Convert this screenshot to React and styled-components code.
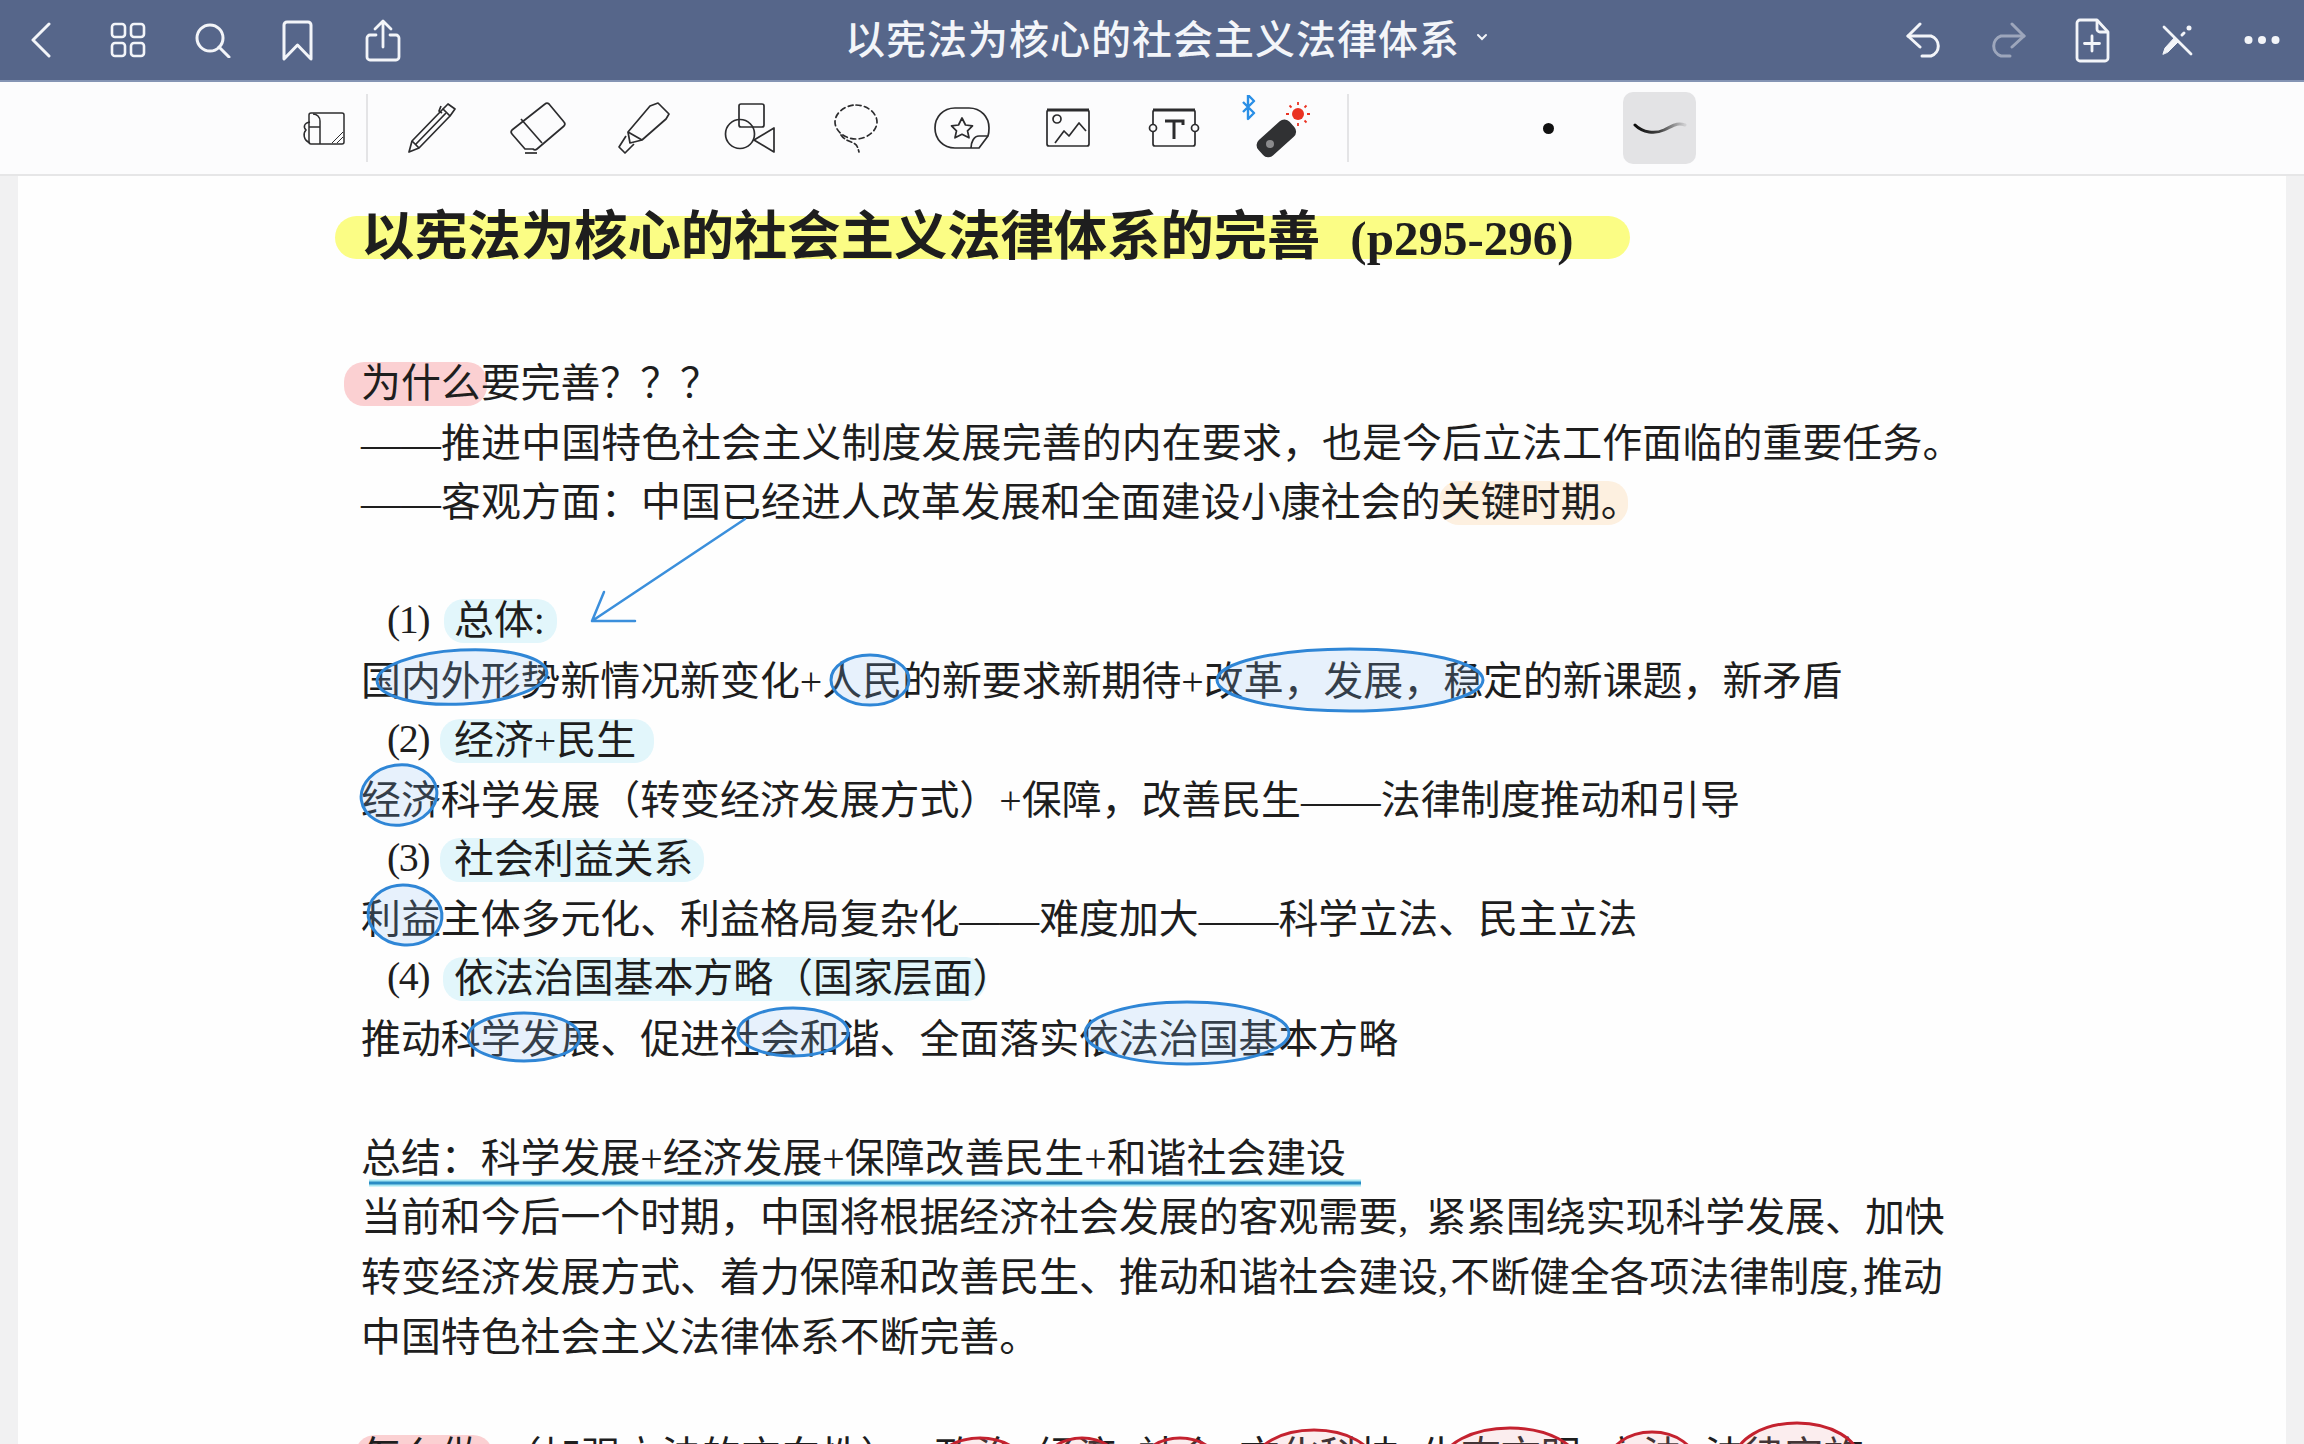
import React from "react";
import styled, { createGlobalStyle } from "styled-components";

const GlobalStyle = createGlobalStyle`
  html, body {
    margin: 0;
    padding: 0;
    background: #f1f1f2;
  }
`;

const Page = styled.div`
  position: relative;
  display: flex;
  flex-direction: column;
  width: 2304px;
  height: 1444px;
  overflow: hidden;
  background: #f1f1f2;
`;

const Header = styled.header`
  display: flex;
  align-items: center;
  flex: none;
  height: 80px;
  background: #56668a;
  border-bottom: 2px solid #8494b4;
  color: #f3f5f9;
`;

const HeaderGroup = styled.div`
  display: flex;
  margin-left: ${(props) => (props.$end ? "auto" : "0")};
`;

const HeaderSlot = styled.span`
  display: flex;
  align-items: center;
  justify-content: center;
  width: 85px;
  height: 80px;
  opacity: ${(props) => (props.$dim ? 0.45 : 1)};
`;

const DocTitle = styled.div`
  display: flex;
  align-items: center;
  gap: 16px;
  height: 74px;
  margin: 0 0 6px 420px;
  font: 500 40px/74px "Noto Sans CJK SC", sans-serif;
  letter-spacing: 1px;
  white-space: nowrap;
`;

const Toolbar = styled.nav`
  display: flex;
  align-items: center;
  flex: none;
  height: 92px;
  padding-left: 282px;
  background: #fcfcfd;
  border-bottom: 2px solid #e6e6e7;
`;

const ToolSlot = styled.span`
  display: flex;
  align-items: center;
  justify-content: center;
  width: ${(props) => props.$width || 106}px;
  height: 92px;
  color: #2c2c2e;
`;

const ToolDivider = styled.span`
  flex: none;
  width: 2px;
  height: 68px;
  background: #e4e4e6;
`;

const ToolGroup = styled.div`
  display: flex;
  margin: 0 14px 0 11px;
`;

const StrokeDot = styled.span`
  flex: none;
  width: 11px;
  height: 11px;
  margin-left: 194px;
  border-radius: 50%;
  background: #111;
`;

const StrokeStyle = styled.span`
  display: flex;
  align-items: center;
  justify-content: center;
  width: 73px;
  height: 72px;
  margin-left: 69px;
  border-radius: 10px;
  background: #e3e3e5;
`;

const Sheet = styled.main`
  flex: 1;
  margin: 0 18px;
  padding: 26px 0 0 343px;
  background: #fefefe;
  color: #1e1e1e;
  font-family: "Liberation Serif", "Noto Sans CJK SC", sans-serif;
  font-size: 39.9px;
`;

const TitleRow = styled.h1`
  display: flex;
  align-items: center;
  height: 70px;
  margin: 0 0 82px -26px;
`;

const TitleMark = styled.span`
  box-sizing: border-box;
  width: 1295px;
  height: 43px;
  padding-left: 26px;
  border-radius: 22px;
  background: #fbfd85;
  font: 700 53.3px/32px "Noto Sans CJK SC", sans-serif;
  white-space: nowrap;
`;

const TitlePages = styled.span`
  margin-left: 30px;
  font: 700 49px/32px "Liberation Serif", serif;
`;

const Line = styled.div`
  height: 59.6px;
  line-height: ${(props) => (props.$indent ? 57 : 59.6)}px;
  white-space: nowrap;
  padding-left: ${(props) => (props.$indent ? 26 : 0)}px;
  letter-spacing: ${(props) => props.$track || 0}px;
`;

const Number = styled.span`
  display: inline-block;
  width: 67px;
  line-height: 40px;
  vertical-align: 1.5px;
  letter-spacing: -1.5px;
`;

const tones = {
  pink: "#fbd0d2",
  peach: "#fdf0e0",
  cyan: "#e2f6fb",
};

const Mark = styled.span`
  display: inline-block;
  box-sizing: border-box;
  height: 44px;
  line-height: 44px;
  padding: 0 ${(props) => props.$r || 0}px 0 ${(props) => props.$l || 0}px;
  margin: 0 -${(props) => props.$r || 0}px 0 -${(props) => props.$l || 0}px;
  border-radius: 20px;
  background: ${(props) => tones[props.$tone]};
  white-space: nowrap;
  width: ${(props) => (props.$w ? `${props.$w}px` : "auto")};
`;

const Sep = styled.span`
  letter-spacing: -18px;
`;

const Comma = styled.span`
  margin-right: ${(props) => props.$gap}px;
`;

const ListStart = styled.span`
  margin-left: 14px;
`;

const InkLayer = styled.svg`
  position: absolute;
  top: 0;
  left: 0;
  pointer-events: none;
`;

const Back = () => (
  <svg width="25" height="36" viewBox="0 0 25 36" fill="none" stroke="currentColor" strokeWidth="3" strokeLinecap="round" strokeLinejoin="round">
    <polyline points="19,2 3,18 19,34" />
  </svg>
);

const Grid = () => (
  <svg width="36" height="36" viewBox="0 0 36 36" fill="none" stroke="currentColor" strokeWidth="2.6">
    <rect x="2" y="2" width="13" height="13" rx="3" />
    <rect x="21" y="2" width="13" height="13" rx="3" />
    <rect x="2" y="21" width="13" height="13" rx="3" />
    <rect x="21" y="21" width="13" height="13" rx="3" />
  </svg>
);

const Search = () => (
  <svg width="36" height="35" viewBox="0 0 36 35" fill="none" stroke="currentColor" strokeWidth="3" strokeLinecap="round">
    <circle cx="15" cy="15" r="13" />
    <line x1="24" y1="24" x2="34" y2="34" />
  </svg>
);

const Bookmark = () => (
  <svg width="31" height="41" viewBox="0 0 31 41" fill="none" stroke="currentColor" strokeWidth="3" strokeLinejoin="round">
    <path d="M2 39V5a3 3 0 0 1 3-3h21a3 3 0 0 1 3 3v34L15.500 25z" />
  </svg>
);

const Share = () => (
  <svg width="36" height="43" viewBox="0 0 36 43" fill="none" stroke="currentColor" strokeWidth="2.8" strokeLinecap="round" strokeLinejoin="round">
    <path d="M18 28V3M10 10l8-8 8 8" />
    <path d="M11 16H5a3 3 0 0 0-3 3v19a3 3 0 0 0 3 3h26a3 3 0 0 0 3-3V19a3 3 0 0 0-3-3h-6" />
  </svg>
);

const TitleCaret = () => (
  <svg width="12" height="8" viewBox="0 0 12 8" fill="none" stroke="currentColor" strokeWidth="2" strokeLinecap="round">
    <path d="M2 2l4 4 4-4" />
  </svg>
);

const Undo = () => (
  <svg width="38" height="36" viewBox="-3 0 38 36" fill="none" stroke="currentColor" strokeWidth="3" strokeLinecap="round" strokeLinejoin="round">
    <path d="M14 2L2 14l12 11" />
    <path d="M2 14h23a10.500 10.500 0 0 1 0 20h-9" />
  </svg>
);

const Redo = () => (
  <svg width="38" height="36" viewBox="0 0 38 36" fill="none" stroke="currentColor" strokeWidth="3" strokeLinecap="round" strokeLinejoin="round">
    <path d="M24 2l12 12-12 11" />
    <path d="M36 14H13a10.500 10.500 0 0 0 0 20h9" />
  </svg>
);

const AddPage = () => (
  <svg width="36" height="45" viewBox="0 0 36 45" fill="none" stroke="currentColor" strokeWidth="2.8" strokeLinecap="round" strokeLinejoin="round">
    <path d="M6 2h17l11 12v26a3 3 0 0 1-3 3H6a3 3 0 0 1-3-3V5a3 3 0 0 1 3-3z" />
    <path d="M23 3v8a3 3 0 0 0 3 3h7" />
    <path d="M18 18v15M10.500 25.500h15" />
  </svg>
);

const PenCross = () => (
  <svg width="32" height="32" viewBox="0 0 32 32" fill="none" stroke="currentColor" strokeLinecap="round">
    <line x1="3" y1="3" x2="30" y2="30" strokeWidth="2.8" />
    <path d="M2 30l2-6 10-11 4 4L7 28z" fill="currentColor" strokeWidth="1" />
    <line x1="21" y1="11" x2="23" y2="9" strokeWidth="3" />
    <circle cx="28" cy="4" r="2.500" fill="currentColor" stroke="none" />
  </svg>
);

const More = () => (
  <svg width="36" height="10" viewBox="0 0 36 10" fill="currentColor">
    <circle cx="4.500" cy="5" r="4" />
    <circle cx="18" cy="5" r="4" />
    <circle cx="31.500" cy="5" r="4" />
  </svg>
);

const SketchView = () => (
  <svg width="44" height="35" viewBox="0 0 44 35" fill="none" stroke="currentColor" strokeWidth="1.500">
    <rect x="7" y="2" width="35" height="31" rx="2" />
    <path d="M7 16h11M18 33V10c0-4-3-7-7-7" />
    <path d="M8 11c-6 1-7 5-4 8-3 3-3 10 4 13" />
    <path d="M30 32l11-11M35 32l6-6" strokeWidth="1" />
  </svg>
);

const Pen = () => (
  <svg width="50" height="52" viewBox="0 0 50 52" fill="none" stroke="currentColor" strokeWidth="1.700" strokeLinejoin="round">
    <path d="M2 50l3-11L36 7l7 7L12 46z" />
    <path d="M5 39l7 7M9 42L39 11" />
    <path d="M36 7l5-5 7 5-5 7" />
    <path d="M34 4l-2 5 3 2" />
  </svg>
);

const Eraser = () => (
  <svg width="58" height="55" viewBox="0 0 58 55" fill="none" stroke="currentColor" strokeWidth="1.700" strokeLinejoin="round">
    <path d="M36 3a3 3 0 0 1 4 0l15 18a3 3 0 0 1 0 4L28 48a3 3 0 0 1-4 0H16L3 33a3 3 0 0 1 0-4z" />
    <path d="M14 20l21 24" transform="translate(-2 -2)" />
    <path d="M16 52h12" />
  </svg>
);

const Highlighter = () => (
  <svg width="54" height="54" viewBox="0 0 54 54" fill="none" stroke="currentColor" strokeWidth="1.700" strokeLinejoin="round">
    <path d="M41 2l11 11-3 5-24 21-12 3-2-11 22-26z" />
    <path d="M11 31l14 8" />
    <path d="M9 35l-7 11 6 6 9-9" />
  </svg>
);

const Shapes = () => (
  <svg width="52" height="50" viewBox="0 0 52 50" fill="none" stroke="currentColor" strokeWidth="1.700" strokeLinejoin="round">
    <rect x="15" y="1" width="25" height="23" rx="2" />
    <circle cx="16" cy="31" r="14.500" />
    <path d="M30 37l20-12v24z" />
  </svg>
);

const Lasso = () => (
  <svg width="46" height="50" viewBox="0 0 46 50" fill="none" stroke="currentColor" strokeWidth="1.700" strokeLinecap="round">
    <path d="M23 2c11 0 21 8 21 17s-10 17-21 17S2 28 2 19 12 2 23 2z" strokeDasharray="5 3.500" />
    <path d="M8 32c4 6 12 7 14 9 2 1 3 4 4 8" strokeDasharray="5 3" />
  </svg>
);

const Sticker = () => (
  <svg width="58" height="44" viewBox="0 0 58 44" fill="none" stroke="currentColor" strokeWidth="1.700" strokeLinejoin="round">
    <path d="M38 42H22C10 42 2 33 2 22S10 2 22 2h14c12 0 20 9 20 20 0 3 0 5-1 8L46 42z" />
    <path d="M38 42c0-6 3-12 8-12h9" />
    <path d="M29 12l3.500 7 7 .800-5 5 1.500 7-7-3.500-7 3.500 1.500-7-5-5 7-.800z" />
  </svg>
);

const Picture = () => (
  <svg width="46" height="40" viewBox="0 0 46 40" fill="none" stroke="currentColor" strokeWidth="1.700" strokeLinejoin="round">
    <rect x="2" y="2" width="42" height="36" rx="2" />
    <path d="M2 2h42" strokeWidth="3" />
    <circle cx="12" cy="11" r="4" />
    <path d="M10 35l9-12 5 5 10-13 7 8" />
  </svg>
);

const TextBox = () => (
  <svg width="52" height="40" viewBox="0 0 52 40" fill="none" stroke="currentColor" strokeWidth="1.700">
    <rect x="5" y="2" width="42" height="36" rx="2" />
    <path d="M5 2h42" strokeWidth="3" />
    <path d="M17 13h18v4M26 13v18" strokeWidth="3" />
    <circle cx="5" cy="20" r="3.500" fill="#fcfcfd" />
    <circle cx="47" cy="20" r="3.500" fill="#fcfcfd" />
  </svg>
);

const LaserPointer = () => (
  <svg width="78" height="66" viewBox="0 0 78 66" fill="none">
    <path d="M2 7l11 11-6 6V0l6 6L2 17" stroke="#2a8fe6" strokeWidth="2.400" strokeLinejoin="round" />
    <rect x="14" y="33" width="42" height="21" rx="7" fill="#303133" transform="rotate(-42 35 43)" />
    <circle cx="29" cy="49" r="4" fill="#8b8b8d" />
    <circle cx="57" cy="19" r="6" fill="#ea3323" />
    <path d="M57 7v3M57 28v3M45 19h3M66 19h3M48.500 10.500l2 2M63.500 25.500l2 2M65.500 10.500l-2 2" stroke="#ea3323" strokeWidth="1.800" />
  </svg>
);

const BrushStroke = () => (
  <svg width="54" height="16" viewBox="0 0 54 16" fill="none">
    <defs>
      <linearGradient id="brushFade" x1="0" x2="1" y1="0" y2="0">
        <stop offset="0" stopColor="#0c0c0c" />
        <stop offset="0.5" stopColor="#444" />
        <stop offset="1" stopColor="#d0d0d2" />
      </linearGradient>
    </defs>
    <path d="M2 5c8 8 20 9 29 5S44 2 52 5" stroke="url(#brushFade)" strokeWidth="3" strokeLinecap="round" />
  </svg>
);

const blueRings = [
  { cx: 462, cy: 677, rx: 85, ry: 27, tilt: -3 },
  { cx: 870, cy: 680, rx: 39, ry: 25, tilt: 0 },
  { cx: 1350, cy: 680, rx: 133, ry: 31, tilt: 0 },
  { cx: 399, cy: 795, rx: 38, ry: 30, tilt: -8 },
  { cx: 405, cy: 915, rx: 37, ry: 30, tilt: 6 },
  { cx: 524, cy: 1037, rx: 56, ry: 24, tilt: 0 },
  { cx: 793, cy: 1032, rx: 55, ry: 24, tilt: 0 },
  { cx: 1187, cy: 1033, rx: 102, ry: 31, tilt: 0 },
];

const redRings = [
  { cx: 980, cy: 1466, rx: 44, ry: 28 },
  { cx: 1082, cy: 1466, rx: 38, ry: 28 },
  { cx: 1180, cy: 1466, rx: 39, ry: 28 },
  { cx: 1314, cy: 1464, rx: 60, ry: 34 },
  { cx: 1510, cy: 1464, rx: 68, ry: 36 },
  { cx: 1652, cy: 1464, rx: 44, ry: 32 },
  { cx: 1797, cy: 1460, rx: 62, ry: 37 },
];

const Ink = () => (
  <InkLayer width="2304" height="1444" viewBox="0 0 2304 1444" fill="none">
    {blueRings.map((ring) => (
      <ellipse
        key={`${ring.cx}-${ring.cy}`}
        cx={ring.cx}
        cy={ring.cy}
        rx={ring.rx}
        ry={ring.ry}
        transform={`rotate(${ring.tilt} ${ring.cx} ${ring.cy})`}
        fill="#8ec0f5"
        fillOpacity="0.2"
        stroke="#2f86d6"
        strokeWidth="3"
      />
    ))}
    {redRings.map((ring) => (
      <ellipse
        key={ring.cx}
        cx={ring.cx}
        cy={ring.cy}
        rx={ring.rx}
        ry={ring.ry}
        fill="#f0a0a8"
        fillOpacity="0.18"
        stroke="#c4222f"
        strokeWidth="3"
      />
    ))}
    <path d="M745 519L592 621M604 592L592 621H635" stroke="#3b8fdc" strokeWidth="2.500" strokeLinecap="round" strokeLinejoin="round" />
    <path d="M369 1183H1361" stroke="#a5e6f2" strokeWidth="7" />
    <path d="M369 1183H1361" stroke="#2a8cc4" strokeWidth="3" />
  </InkLayer>
);

const App = () => (
  <Page>
    <GlobalStyle />
    <Header>
      <HeaderGroup>
        <HeaderSlot><Back /></HeaderSlot>
        <HeaderSlot><Grid /></HeaderSlot>
        <HeaderSlot><Search /></HeaderSlot>
        <HeaderSlot><Bookmark /></HeaderSlot>
        <HeaderSlot><Share /></HeaderSlot>
      </HeaderGroup>
      <DocTitle>
        以宪法为核心的社会主义法律体系
        <TitleCaret />
      </DocTitle>
      <HeaderGroup $end>
        <HeaderSlot><Undo /></HeaderSlot>
        <HeaderSlot $dim><Redo /></HeaderSlot>
        <HeaderSlot><AddPage /></HeaderSlot>
        <HeaderSlot><PenCross /></HeaderSlot>
        <HeaderSlot><More /></HeaderSlot>
      </HeaderGroup>
    </Header>
    <Toolbar>
      <ToolSlot $width={84}><SketchView /></ToolSlot>
      <ToolDivider />
      <ToolGroup>
        <ToolSlot><Pen /></ToolSlot>
        <ToolSlot><Eraser /></ToolSlot>
        <ToolSlot><Highlighter /></ToolSlot>
        <ToolSlot><Shapes /></ToolSlot>
        <ToolSlot><Lasso /></ToolSlot>
        <ToolSlot><Sticker /></ToolSlot>
        <ToolSlot><Picture /></ToolSlot>
        <ToolSlot><TextBox /></ToolSlot>
        <ToolSlot><LaserPointer /></ToolSlot>
      </ToolGroup>
      <ToolDivider />
      <StrokeDot />
      <StrokeStyle><BrushStroke /></StrokeStyle>
    </Toolbar>
    <Sheet>
      <TitleRow>
        <TitleMark>
          以宪法为核心的社会主义法律体系的完善
          <TitlePages>(p295-296)</TitlePages>
        </TitleMark>
      </TitleRow>
      <Line><Mark $tone="pink" $l={17} $r={6}>为什么</Mark>要完善？？？</Line>
      <Line $track={0.15}>——推进中国特色社会主义制度发展完善的内在要求，也是今后立法工作面临的重要任务。</Line>
      <Line $track={0.1}>——客观方面：中国已经进人改革发展和全面建设小康社会的<Mark $tone="peach" $l={2} $w={189}>关键时期。</Mark></Line>
      <Line />
      <Line $indent><Number>(1)</Number><Mark $tone="cyan" $l={10} $r={12}>总体:</Mark></Line>
      <Line>国内外形势新情况新变化+人民的新要求新期待+改革，发展，稳定的新课题，新矛盾</Line>
      <Line $indent><Number>(2)</Number><Mark $tone="cyan" $l={14} $r={18}>经济+民生</Mark></Line>
      <Line>经济科学发展（转变经济发展方式）+保障，改善民生——法律制度推动和引导</Line>
      <Line $indent><Number>(3)</Number><Mark $tone="cyan" $l={14} $r={11}>社会利益关系</Mark></Line>
      <Line>利益主体多元化、利益格局复杂化——难度加大——科学立法、民主立法</Line>
      <Line $indent><Number>(4)</Number><Mark $tone="cyan" $l={11} $w={543}>依法治国基本方略（国家层面）</Mark></Line>
      <Line>推动科学发展、促进社会和谐、全面落实依法治国基本方略</Line>
      <Line />
      <Line>总结：科学发展+经济发展+保障改善民生+和谐社会建设</Line>
      <Line>当前和今后一个时期，中国将根据经济社会发展的客观需要<Comma $gap={18}>,</Comma>紧紧围绕实现科学发展、加快</Line>
      <Line>转变经济发展方式、着力保障和改善民生、推动和谐社会建设<Comma $gap={2}>,</Comma>不断健全各项法律制度<Comma $gap={4}>,</Comma>推动</Line>
      <Line>中国特色社会主义法律体系不断完善。</Line>
      <Line />
      <Line>
        <Mark $tone="pink" $l={6} $r={12}>怎么做</Mark>: （加强立法的方向性）：<ListStart>政治</ListStart><Sep>、</Sep>经济<Sep>、</Sep>社会<Sep>、</Sep>文化科技<Sep>、</Sep>生态文明<Sep>、</Sep>立法<Sep>、</Sep>法律实施
      </Line>
    </Sheet>
    <Ink />
  </Page>
);

export default App;
